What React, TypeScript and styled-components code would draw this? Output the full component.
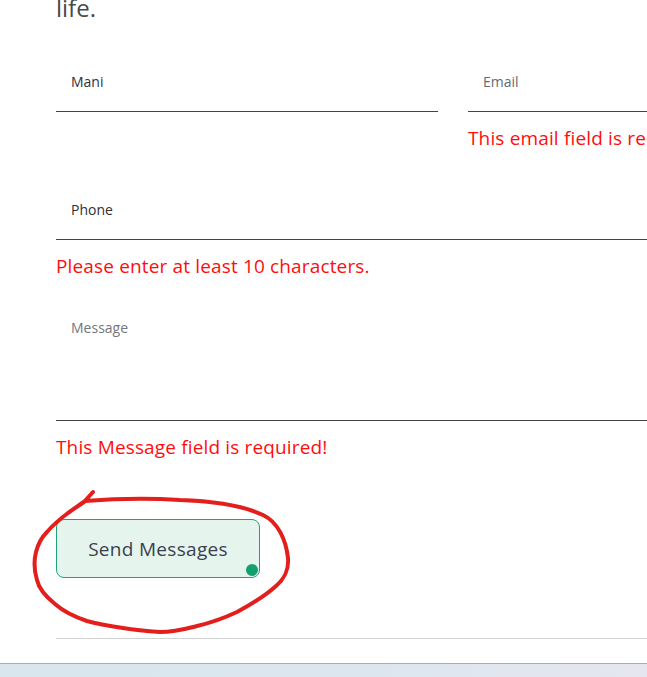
import React from 'react';
import styled, { createGlobalStyle } from 'styled-components';

const GlobalStyle = createGlobalStyle`
  html, body {
    margin: 0;
    padding: 0;
    background: #ffffff;
    overflow: hidden;
  }
  body {
    font-family: "Open Sans", Lato, "Noto Sans", sans-serif;
  }
`;

const Page = styled.div`
  width: 647px;
  height: 677px;
  overflow: hidden;
  display: flex;
  flex-direction: column;
`;

const Section = styled.section`
  padding-left: 56px;
  display: flex;
  flex-direction: column;
`;

const Intro = styled.p`
  margin: -8px 0 0;
  font-size: 24px;
  line-height: 32px;
  color: #4a4a4a;
`;

const Form = styled.form`
  width: 794px;
  margin-top: 27px;
  display: grid;
  grid-template-columns: 382px 382px;
  column-gap: 30px;
  row-gap: 28px;
`;

const Field = styled.div<{ $wide?: boolean }>`
  display: flex;
  flex-direction: column;
  grid-column: ${(p) => (p.$wide ? '1 / span 2' : 'auto')};
`;

const Input = styled.input`
  box-sizing: border-box;
  height: 61px;
  padding: 0 15px;
  border: none;
  border-bottom: 1px solid #444;
  outline: none;
  background: transparent;
  font-family: inherit;
  font-size: 14px;
  color: #2f2f3a;

  &::placeholder {
    color: #666a70;
  }
`;

const TextArea = styled.textarea`
  box-sizing: border-box;
  height: 114px;
  padding: 12px 15px 0;
  border: none;
  border-bottom: 1px solid #444;
  outline: none;
  resize: none;
  background: transparent;
  font-family: inherit;
  font-size: 14px;
  line-height: 18px;
  color: #2f2f3a;

  &::placeholder {
    color: #74777d;
  }
`;

const ErrorText = styled.span`
  margin-top: 13px;
  font-size: 19px;
  line-height: 26px;
  letter-spacing: 0.15px;
  color: #ff0d0d;
  white-space: nowrap;
`;

const ButtonWrap = styled.div`
  position: relative;
  margin-top: 59px;
  width: 204px;
  height: 59px;
`;

const SendButton = styled.button`
  position: relative;
  box-sizing: border-box;
  width: 204px;
  height: 59px;
  border: 1px solid #1fa27a;
  border-radius: 8px;
  background: #e5f5ee;
  color: #3b4050;
  font-family: inherit;
  font-size: 19px;
  letter-spacing: 0.3px;
  cursor: pointer;
`;

const Dot = styled.span`
  position: absolute;
  right: 1px;
  bottom: 1px;
  width: 12px;
  height: 12px;
  border-radius: 50%;
  background: #12a06f;
`;

const Scribble = styled.svg`
  position: absolute;
  left: -30px;
  top: -34px;
  width: 270px;
  height: 150px;
  pointer-events: none;
  overflow: visible;
`;

const Divider = styled.hr`
  margin: 60px 0 0;
  border: none;
  border-top: 1px solid #d2d2d2;
  width: 100%;
`;

const Taskbar = styled.div`
  margin-top: 24px;
  height: 14px;
  border-top: 1px solid #a8adb3;
  background: linear-gradient(90deg, #d9e6ee 0%, #dce6ef 55%, #e6e6f0 100%);
`;

export default function App() {
  return (
    <Page>
      <GlobalStyle />
      <Section>
        <Intro>life.</Intro>
        <Form onSubmit={(e) => e.preventDefault()}>
          <Field>
            <Input type="text" defaultValue="Mani" />
          </Field>
          <Field>
            <Input type="email" placeholder="Email" />
            <ErrorText>This email field is required!</ErrorText>
          </Field>
          <Field $wide>
            <Input type="tel" defaultValue="Phone" />
            <ErrorText>Please enter at least 10 characters.</ErrorText>
          </Field>
          <Field $wide>
            <TextArea placeholder="Message" />
            <ErrorText>This Message field is required!</ErrorText>
          </Field>
        </Form>
        <ButtonWrap>
          <SendButton type="button">
            Send Messages
            <Dot />
          </SendButton>
          <Scribble viewBox="26 485 270 150">
            <path
              d="M93 492 L83 503 M85 501 C110 499 150 498 180 500 C210 501 240 504 263 515 C278 522 286 540 288 558 C289 570 285 578 276 586 C265 596 250 605 237 612 C222 619 210 623 197 626 C185 629 175 632 160 632 C145 631 135 630 123 628 C110 626 98 624 87 621 C75 617 63 611 55 604 C45 596 39 589 37 580 C34 570 34 560 36 552 C38 544 41 538 47 532 C53 525 60 519 68 513 C75 508 81 504 88 499"
              fill="none"
              stroke="#e31f1d"
              strokeWidth="4"
              strokeLinecap="round"
              strokeLinejoin="round"
            />
          </Scribble>
        </ButtonWrap>
        <Divider />
      </Section>
      <Taskbar />
    </Page>
  );
}
